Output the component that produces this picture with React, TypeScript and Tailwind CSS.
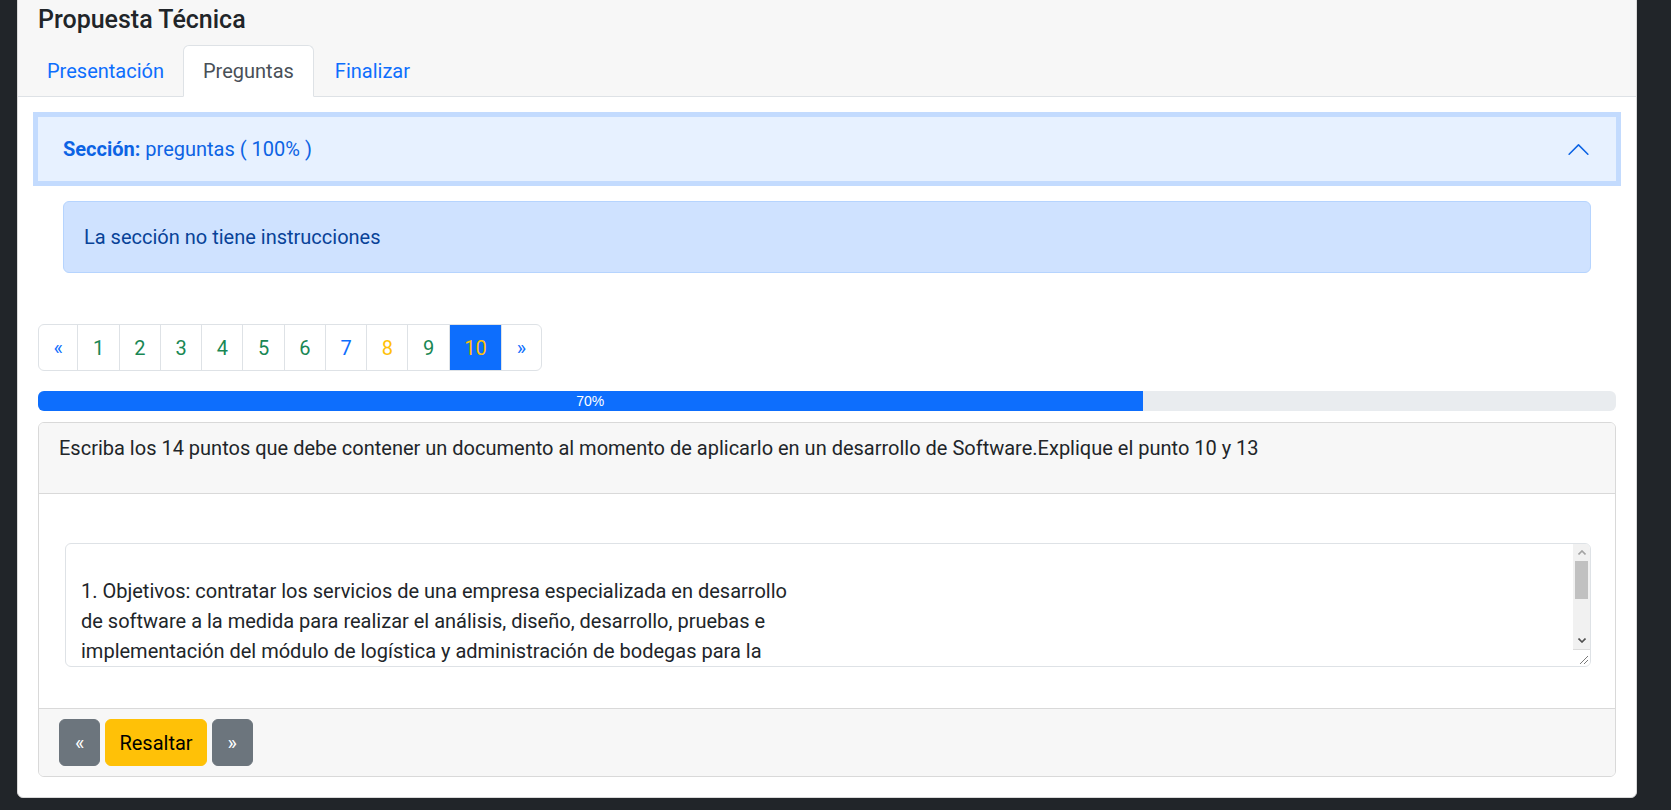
import { Fragment } from 'react';

const PAGES = [
  { label: '«', className: 'text-[#0d6efd]' },
  { label: '1', className: 'text-[#198754]' },
  { label: '2', className: 'text-[#198754]' },
  { label: '3', className: 'text-[#198754]' },
  { label: '4', className: 'text-[#198754]' },
  { label: '5', className: 'text-[#198754]' },
  { label: '6', className: 'text-[#198754]' },
  { label: '7', className: 'text-[#0d6efd]' },
  { label: '8', className: 'text-[#ffc107]' },
  { label: '9', className: 'text-[#198754]' },
  { label: '10', className: 'text-[#ffc107] bg-[#0d6efd] border-[#0d6efd] relative z-10' },
  { label: '»', className: 'text-[#0d6efd]' },
];

const ANSWER_LINES = [
  '',
  '1. Objetivos: contratar los servicios de una empresa especializada en desarrollo',
  'de software a la medida para realizar el análisis, diseño, desarrollo, pruebas e',
  'implementación del módulo de logística y administración de bodegas para la',
];

/** Fake scrollbar of the answer textarea, drawn so it looks the same everywhere. */
function TextareaScrollbar() {
  return (
    <div className="flex w-[17px] shrink-0 flex-col bg-[#f1f1f1]">
      <div className="flex h-[17px] items-center justify-center">
        <svg width="8" height="5" viewBox="0 0 8 5" aria-hidden>
          <polyline points="0.5,4.5 4,1 7.5,4.5" fill="none" stroke="#a3a3a3" strokeWidth="1.6" />
        </svg>
      </div>
      <div className="mx-[2px] h-[38px] bg-[#c1c1c1]" />
      <div className="flex-1" />
      <div className="flex h-[17px] items-center justify-center">
        <svg width="8" height="5" viewBox="0 0 8 5" aria-hidden>
          <polyline points="0.5,0.5 4,4 7.5,0.5" fill="none" stroke="#505050" strokeWidth="1.6" />
        </svg>
      </div>
      {/* resize grip corner */}
      <div className="flex h-[17px] items-end justify-end border-t border-[#dcdcdc] bg-white p-[2px]">
        <svg width="10" height="10" viewBox="0 0 10 10" aria-hidden>
          <line x1="2" y1="10" x2="10" y2="2" stroke="#7a7a7a" strokeWidth="1" />
          <line x1="6" y1="10" x2="10" y2="6" stroke="#7a7a7a" strokeWidth="1" />
        </svg>
      </div>
    </div>
  );
}

export default function App() {
  return (
    <div className="h-[810px] overflow-hidden bg-[#212529] font-[Roboto,'Liberation_Sans',sans-serif] text-[20px] leading-[30px] text-[#212529]">
      <div className="ml-[17px] mr-[34px] -mt-[6px] rounded-[6px] border border-[#d9d9d9] bg-white">
        {/* Card header with title and tabs */}
        <div className="rounded-t-[5px] border-b border-[#dee2e6] bg-[#f7f7f7] px-[20px] pt-[10px]">
          <h5 className="mb-[10px] text-[25px] font-medium leading-[30px]">Propuesta Técnica</h5>
          <nav className="-mx-[10px] -mb-px flex">
            <span className="border border-transparent px-[18px] py-[10px] text-[#0d6efd]">Presentación</span>
            <span className="rounded-t-[6px] border border-[#dee2e6] border-b-white bg-white px-[19px] py-[10px] text-[#495057]">
              Preguntas
            </span>
            <span className="border border-transparent px-[20px] py-[10px] text-[#0d6efd]">Finalizar</span>
          </nav>
        </div>

        <div className="p-[20px]">
          {/* Section accordion, expanded and focused */}
          <div className="flex h-[64px] items-center justify-between bg-[#e7f1ff] px-[25px] text-[#0c63e4] shadow-[0_0_0_5px_#c3dbfe]">
            <span>
              <b className="font-bold">Sección:</b> preguntas ( 100% )
            </span>
            <svg width="25" height="25" viewBox="0 0 16 16" className="rotate-180" aria-hidden>
              <path
                fill="#0c63e4"
                fillRule="evenodd"
                d="M1.646 4.646a.5.5 0 0 1 .708 0L8 10.293l5.646-5.647a.5.5 0 0 1 .708.708l-6 6a.5.5 0 0 1-.708 0l-6-6a.5.5 0 0 1 0-.708z"
              />
            </svg>
          </div>
          <div className="px-[25px] py-[20px]">
            <div className="mb-[20px] rounded-[6px] border border-[#b6d4fe] bg-[#cfe2ff] p-[20px] text-[#084298]">
              La sección no tiene instrucciones
            </div>
          </div>

          {/* Question pager */}
          <nav className="mt-[11px] flex">
            {PAGES.map((p, i) => (
              <Fragment key={p.label}>
                <span
                  className={`border border-[#dee2e6] px-[14.5px] py-[7.5px] ${p.className} ${
                    i === 0 ? 'rounded-l-[6px]' : '-ml-px'
                  } ${i === PAGES.length - 1 ? 'rounded-r-[6px]' : ''}`}
                >
                  {p.label}
                </span>
              </Fragment>
            ))}
          </nav>

          {/* Progress */}
          <div className="mt-[20px] flex h-[20px] overflow-hidden rounded-[6px] bg-[#e9ecef]">
            <div className="flex w-[70%] items-center justify-center bg-[#0d6efd] font-['Liberation_Sans',Arial,sans-serif] text-[14px] leading-none text-white">
              70%
            </div>
          </div>

          {/* Question card */}
          <div className="mt-[11px] rounded-[6px] border border-[#d9d9d9]">
            <div className="rounded-t-[5px] border-b border-[#d9d9d9] bg-[#f7f7f7] px-[20px] py-[10px]">
              <p className="mb-[20px]">
                Escriba los 14 puntos que debe contener un documento al momento de aplicarlo en un desarrollo de
                Software.Explique el punto 10 y 13
              </p>
            </div>
            <div className="pb-[41px] pl-[26px] pr-[24px] pt-[49px]">
              <div className="flex h-[124px] overflow-hidden rounded-[6px] border border-[#dee2e6]">
                <div className="flex-1 overflow-hidden px-[15px] pt-[2px]">
                  {ANSWER_LINES.map((line, i) => (
                    <div key={i} className="h-[30px] whitespace-pre">
                      {line}
                    </div>
                  ))}
                </div>
                <TextareaScrollbar />
              </div>
            </div>
            <div className="flex gap-[5px] rounded-b-[5px] border-t border-[#d9d9d9] bg-[#f7f7f7] px-[20px] py-[10px]">
              <button className="rounded-[6px] border border-[#6c757d] bg-[#6c757d] px-[15px] py-[7.5px] text-white">
                «
              </button>
              <button className="rounded-[6px] border border-[#ffc107] bg-[#ffc107] px-[13px] py-[7.5px] text-black">
                Resaltar
              </button>
              <button className="rounded-[6px] border border-[#6c757d] bg-[#6c757d] px-[15px] py-[7.5px] text-white">
                »
              </button>
            </div>
          </div>
        </div>
      </div>
    </div>
  );
}
